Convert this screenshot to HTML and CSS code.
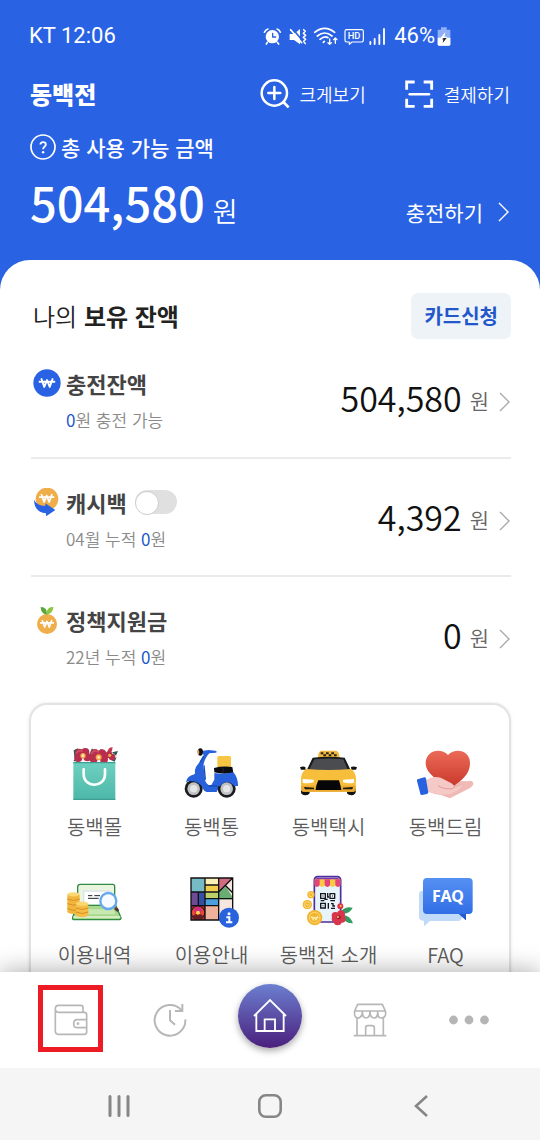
FILE: index.html
```html
<!DOCTYPE html>
<html lang="ko">
<head>
<meta charset="utf-8">
<meta name="viewport" content="width=device-width, initial-scale=1">
<title>동백전</title>
<link rel="stylesheet" href="styles.css">
</head>
<body>
<svg class="defs" aria-hidden="true">
  <defs>
    <linearGradient id="g-bag" x1="0" y1="0" x2="0" y2="1"><stop offset="0" stop-color="#6fd0c0"/><stop offset="1" stop-color="#4cb8a8"/></linearGradient>
    <linearGradient id="g-heart" x1="0" y1="0" x2="0" y2="1"><stop offset="0" stop-color="#ec6a58"/><stop offset="1" stop-color="#c93a2c"/></linearGradient>
    <linearGradient id="g-faq" x1="0" y1="0" x2="0" y2="1"><stop offset="0" stop-color="#5590f2"/><stop offset="1" stop-color="#2b68e4"/></linearGradient>
    <symbol id="won" viewBox="0 0 48 30"><path d="M1 11H47M8 3L16 26L24 6L32 26L40 3" fill="none" stroke="#fff" stroke-width="5.500" stroke-linejoin="round" stroke-linecap="round"/></symbol>
    <symbol id="chevron" viewBox="0 0 12 22"><path d="M1 2L10 11L1 20" fill="none" stroke="currentColor" stroke-width="1.4"/></symbol>
  </defs>
</svg>

<main class="screen">
  <header class="hero">
    <div class="status">
      <span>KT 12:06</span>
      <div class="status-right">
        <svg class="status-icons" viewBox="40 72 369 66" fill="none" stroke="#fff" stroke-width="3.4" stroke-linecap="round" stroke-linejoin="round">
          <circle cx="68" cy="107" r="20" fill="#fff" stroke="none"/>
          <path d="M53 124L50 129M83 124L87 129" stroke-width="5"/>
          <path d="M44 94Q48 86 55 84M82 84Q89 86 92 94" stroke-width="4.500"/>
          <path d="M69 97V108H78" stroke="#2a62e4" stroke-width="4"/>
          <path d="M120 99H133L151 84V130L133 117H120Z" fill="#fff" stroke="none"/>
          <path d="M127 81L161 122" stroke="#2a62e4" stroke-width="5"/>
          <path d="M123 86L156 125" stroke-width="5"/>
          <path d="M162 86L167 91L161 97L168 103L161 109L168 115L162 121L167 128" stroke-width="4.500"/>
          <path d="M195 94Q225 70 255 94M203 105Q225 87 247 105M211 115Q225 104 235 110M221 124L224 121" stroke-width="5"/>
          <path d="M240 114V130M235 125L240 130L245 125M257 127V111M252 116L257 111L262 116" stroke-width="4"/>
          <path d="M291 86H336Q341 86 341 91V118Q341 123 336 123H307L299 130V123H291Q286 123 286 118V91Q286 86 291 86Z" stroke-width="3.500"/>
          <text class="hd-text" x="313" y="115" text-anchor="middle">HD</text>
          <path d="M362 123V129M375 114V129M389 102V129M403 84V129" stroke-width="5.500"/>
        </svg>
        <span>46%</span>
        <svg class="battery" viewBox="563 76 42 60"><path d="M575 80H592V87H603V131Q603 135 599 135H569Q565 135 565 131V87H575Z" fill="#8fb0f5"/><path d="M565 111H603V131Q603 135 599 135H569Q565 135 565 131Z" fill="#fff"/><path d="M588 95L574 112H582" fill="#fff"/><path d="M588 95L585 108H594L590 113H574Z" fill="#fff"/><path d="M583 112H592L580 127L582 116H577Z" fill="#222"/></svg>
      </div>
    </div>

    <div class="topbar">
      <h1 class="brand">동백전</h1>
      <div class="top-actions">
        <button class="top-action" type="button">
          <svg class="icon-30" viewBox="31 237 90 90" fill="none" stroke="#fff" stroke-width="7.5"><circle cx="74" cy="279" r="38"/><path d="M74 261V297M56 279H92" stroke-linecap="round"/><path d="M101 306L117 322" stroke-width="8"/></svg>
          크게보기
        </button>
        <button class="top-action" type="button">
          <svg class="icon-30" viewBox="465 238 90 90" fill="none" stroke="#fff" stroke-width="8.5"><path d="M473 270V247H497M524 247H548V270M548 297V320H524M497 320H473V297" /><path d="M482 284H540" stroke-width="7.5" stroke-linecap="round"/></svg>
          결제하기
        </button>
      </div>
    </div>

    <div class="total">
      <p class="total-label">
        <svg class="icon-26" viewBox="0 0 26 26" fill="none" stroke="#fff"><circle cx="13" cy="13" r="12" stroke-width="1.7"/><path d="M10.4 10.4C10.4 7.4 15.8 7.4 15.8 10.5C15.8 12.6 13.1 12.8 13.1 15.3" stroke-width="1.8"/><circle cx="13.1" cy="18.3" r="1.2" fill="#fff" stroke="none"/></svg>
        총 사용 가능 금액
      </p>
      <div class="total-line">
        <p class="total-amount">504,580<span class="total-unit">원</span></p>
        <a class="charge" href="#charge">충전하기 <svg class="chevron"><use href="#chevron"/></svg></a>
      </div>
    </div>
  </header>

  <section class="panel">
    <div class="panel-head">
      <h2 class="panel-title">나의 <b>보유 잔액</b></h2>
      <button class="card-button" type="button">카드신청</button>
    </div>

    <ul class="balances">
      <li class="balance">
        <div class="balance-info">
          <div class="balance-name">
            <svg class="icon-28" viewBox="0 0 84 84"><circle cx="42" cy="42" r="41" fill="#2a62e4"/><use href="#won" x="17" y="27" width="50" height="31"/></svg>
            <h3>충전잔액</h3>
          </div>
          <p class="balance-note"><em>0</em>원 충전 가능</p>
        </div>
        <a class="balance-value" href="#balance"><strong>504,580</strong><span>원</span><svg class="chevron"><use href="#chevron"/></svg></a>
      </li>
      <li class="balance">
        <div class="balance-info">
          <div class="balance-name">
            <svg class="icon-28" viewBox="40 55 84 84"><circle cx="82" cy="88" r="34" fill="#f0ae4b"/><use href="#won" x="58" y="72" width="46" height="29"/><path d="M43 90Q51 108 77 109V101L107 121L79 140V131Q44 128 43 90Z" fill="#2a62e4"/></svg>
            <h3><label for="cashback">캐시백</label></h3>
            <input class="toggle" id="cashback" type="checkbox" role="switch">
          </div>
          <p class="balance-note">04월 누적 <em>0</em>원</p>
        </div>
        <a class="balance-value" href="#cashback-history"><strong>4,392</strong><span>원</span><svg class="chevron"><use href="#chevron"/></svg></a>
      </li>
      <li class="balance">
        <div class="balance-info">
          <div class="balance-name">
            <svg class="icon-28" viewBox="39 410 84 84"><circle cx="81" cy="464" r="30" fill="#f0ae4b"/><use href="#won" x="60" y="451" width="42" height="26"/><path d="M81 436Q62 434 62 413Q82 412 81 436Z" fill="#58a83a"/><path d="M80 436Q79 411 100 413Q99 432 80 436Z" fill="#8cc63f"/></svg>
            <h3>정책지원금</h3>
          </div>
          <p class="balance-note">22년 누적 <em>0</em>원</p>
        </div>
        <a class="balance-value" href="#support"><strong>0</strong><span>원</span><svg class="chevron"><use href="#chevron"/></svg></a>
      </li>
    </ul>

    <nav class="services" aria-label="서비스">
      <a class="service" href="#mall">
        <svg class="icon-60" viewBox="135 165 180 180">
          <path d="M161 184L173 178L178 196L164 212ZM208 196L216 178L226 190L214 214ZM240 180L256 186L252 204ZM276 190L294 186L288 200ZM274 214L290 204L284 218ZM160 216L168 206L178 218Z" fill="#2f5a55"/>
          <path d="M262 188Q266 174 278 175Q278 186 270 194Z" fill="#c33a50"/>
          <g fill="#b72f4c"><circle cx="178" cy="191" r="12"/><circle cx="196" cy="189" r="12"/><circle cx="202" cy="205" r="12"/><circle cx="175" cy="207" r="12"/><circle cx="225" cy="193" r="13"/><circle cx="246" cy="194" r="13"/><circle cx="252" cy="211" r="12"/><circle cx="221" cy="210" r="12"/><circle cx="267" cy="197" r="10"/><circle cx="276" cy="204" r="10"/></g>
          <path d="M167 194Q178 180 188 188M212 196Q224 178 236 190" fill="none" stroke="#d34c62" stroke-width="5"/>
          <circle cx="189" cy="200" r="8" fill="#f4a64c"/><circle cx="236" cy="205" r="9" fill="#f4a64c"/><circle cx="189" cy="200" r="4" fill="#ffe9b8"/><circle cx="236" cy="205" r="4" fill="#ffe9b8"/><circle cx="269" cy="199" r="5" fill="#f4a64c"/>
          <path d="M160 219H286V333H163Q160 333 160 330Z" fill="url(#g-bag)"/>
          <path d="M160 219H286V223H160ZM160 329H286V333H160Z" fill="#3f9f95"/>
          <path d="M191 241V255C191 298 255 298 255 255V241" fill="none" stroke="#fff" stroke-width="8" stroke-linecap="round"/>
        </svg>
        동백몰
      </a>
      <a class="service" href="#delivery">
        <svg class="icon-60" viewBox="486 165 180 180">
          <path d="M592 206Q592 201 597 201H628Q633 201 633 206V237H592Z" fill="#f7c443"/>
          <path d="M582 237Q609 230 637 234L640 251Q609 258 583 250Z" fill="#0c0d14"/>
          <path d="M609 237V251" stroke="#333" stroke-width="2"/>
          <path d="M545 186L566 183L586 185Q593 188 588 191L568 193Q552 210 550 232L556 276Q562 291 574 288L583 272V252Q610 257 640 250Q654 265 654 291H598L590 309H560Q551 306 548 298L544 282Q522 266 499 278Q500 264 516 258Q526 257 525 250Q522 238 534 226L551 199Z" fill="#2761dc"/>
          <path d="M551 201L541 219M552 229L556 272M566 291H595Q600 274 622 274" fill="none" stroke="#184bb5" stroke-width="4"/>
          <ellipse cx="541" cy="189" rx="8" ry="11" fill="#111"/><path d="M535 181Q530 189 536 199Q541 190 535 181Z" fill="#f3a13a"/>
          <circle cx="521" cy="299" r="27" fill="#191b20"/><circle cx="521" cy="299" r="19" fill="#bfc1c3"/><circle cx="521" cy="299" r="11" fill="#e4e5e6"/>
          <circle cx="620" cy="299" r="27" fill="#191b20"/><circle cx="620" cy="299" r="19" fill="#bfc1c3"/><circle cx="620" cy="299" r="11" fill="#e4e5e6"/>
          <path d="M496 278Q514 260 550 284L548 296Q533 270 496 278ZM590 292Q599 270 624 268Q644 268 654 291H643Q619 267 600 292Z" fill="#2761dc"/>
        </svg>
        동백통
      </a>
      <a class="service" href="#taxi">
        <svg class="icon-60" viewBox="87 165 180 180">
          <path d="M144 206Q144 186 155 185H198Q208 187 209 206Z" fill="#f0b93e"/>
          <path d="M152 190H160V196H152ZM168 190H176V196H168ZM184 190H192V196H184ZM160 196H168V202H160ZM176 196H184V202H176ZM192 196H200V202H192Z" fill="#2e2614"/>
          <path d="M128 206Q175 201 224 206L244 248H108Z" fill="#17181b"/><path d="M133 211Q175 206 220 211L234 243H117Z" fill="#4a4c50"/>
          <path d="M90 235Q98 231 106 234L107 242H93ZM243 234Q252 231 261 235L258 242H244Z" fill="#111"/>
          <path d="M93 298H119V312Q116 319 106 319Q94 318 93 310ZM231 298H257V310Q255 318 245 319Q233 318 231 312Z" fill="#111"/>
          <path d="M109 240Q175 246 243 240Q258 250 258 270L257 301Q257 308 250 308H102Q93 308 93 301V268Q94 249 109 240Z" fill="#f7be3c"/>
          <path d="M94 290H257V301Q257 308 250 308H102Q93 308 93 301Z" fill="#eaa92f"/>
          <path d="M98 270L131 272V280Q110 285 98 281ZM219 272L252 270V281Q240 285 219 280Z" fill="#fff"/>
          <path d="M145 274H207Q211 285 214 303H137Q139 285 145 274Z" fill="#060608"/>
          <path d="M102 294L132 296V301H105ZM219 296L249 294L247 301H219Z" fill="#1d1a12"/>
        </svg>
        동백택시
      </a>
      <a class="service" href="#dream">
        <svg class="icon-60" viewBox="438 165 180 180">
          <path d="M558 276L593 277Q606 271 610 282Q611 290 600 297L540 328L510 317Q485 314 472 305L525 283Z" fill="#efb9b5"/>
          <path d="M534 198C511 174 467 185 467 223C468 256 506 276 533 287Q550 292 556 287C588 265 600 247 600 221C599 184 557 175 534 198Z" fill="url(#g-heart)"/>
          <path d="M468 273Q490 259 512 266L543 282Q554 288 551 298L580 288Q566 306 540 315L510 317Q486 313 474 307Z" fill="#f5c9c5"/>
          <path d="M504 290Q521 302 548 299L557 289" fill="none" stroke="#df9c99" stroke-width="3"/>
          <path d="M443 271L463 265Q467 264 468 269L475 310Q475 314 471 315L456 318Q452 319 451 314L441 276Q440 272 443 271Z" fill="#2761e0"/>
        </svg>
        동백드림
      </a>
      <a class="service" href="#history">
        <svg class="icon-60" viewBox="135 39 180 180">
          <path d="M181 76H278Q284 76 284 82V139H173V84Q173 76 181 76Z" fill="#e9f5dc" stroke="#2f8a43" stroke-width="4"/>
          <path d="M189 94H272V137H189Z" fill="#fff"/><path d="M189 94H272V98H193V137H189Z" fill="#d9e3e6"/>
          <path d="M204 110H217M223 110H240M204 118H236" stroke="#20252a" stroke-width="3"/>
          <path d="M172 139H287L303 176Q303 182 296 182H163Q156 182 158 175Z" fill="#a9d78c" stroke="#2f8a43" stroke-width="4" stroke-linejoin="round"/>
          <path d="M187 151H281L286 166H182Z" fill="#c7e8b0"/><path d="M160 174H301" stroke="#e4f4d8" stroke-width="5"/>
          <path d="M142 107V158Q144 164 160 165Q177 164 179 158V107Z" fill="#f2b63c"/><ellipse cx="160.500" cy="106" rx="18" ry="6.500" fill="#fbd772"/>
          <path d="M142 120Q160 129 179 120M142 134Q160 143 179 134M142 148Q160 157 170 152" fill="none" stroke="#d98f24" stroke-width="3"/>
          <path d="M168 135V168Q170 174 186 175Q202 174 205 168V135Z" fill="#f5bd45"/><ellipse cx="186.500" cy="134" rx="18.500" ry="6.500" fill="#fbd772"/><path d="M168 147Q186 156 205 147M168 159Q186 168 205 159" fill="none" stroke="#d98f24" stroke-width="3"/>
          <path d="M284 145L293 153" stroke="#7a6655" stroke-width="8"/><path d="M286 148L295 156" stroke="#4d3c33" stroke-width="9"/>
          <circle cx="265" cy="126" r="24" fill="#f6fbff" stroke="#68a8ef" stroke-width="7"/>
        </svg>
        이용내역
      </a>
      <a class="service" href="#guide">
        <svg class="icon-60" viewBox="486 39 180 180">
          <path d="M513 57H638V183H513Z" fill="#f5e6df"/>
          <path d="M513 57H555V99H513Z" fill="#76bac5"/><path d="M555 57H596V78H555Z" fill="#faf0b5"/><path d="M555 78H596V98H555Z" fill="#f2cd4c"/><path d="M555 98H596V119H555Z" fill="#bccf6a"/><path d="M555 119H596V138H555Z" fill="#4c9fdd"/>
          <path d="M513 99H535V140H513Z" fill="#6e4b94"/><path d="M535 99H555V140H535Z" fill="#354fa2"/><path d="M555 138H596V183H555Z" fill="#efb39c"/><path d="M596 57H638L596 99Z" fill="#d36b82"/><path d="M596 99L617 82L638 115V121H596Z" fill="#69ad72"/><path d="M513 140H555V183H513Z" fill="#a22c38"/>
          <path d="M513 57H638V183H513ZM555 57V183M596 57V183M513 99H596M555 78H596M555 119H638M513 140H596M535 99V140M596 99L638 57M617 80L638 101" fill="none" stroke="#101012" stroke-width="4"/>
          <circle cx="534" cy="161" r="20" fill="#e84b2d" stroke="#15101a" stroke-width="3"/><circle cx="534" cy="154" r="11" fill="#cf2b82"/><path d="M518 171Q534 158 550 171Q543 181 534 180Q523 180 518 171Z" fill="#661c24"/><circle cx="534" cy="161" r="6" fill="#ffd24a"/>
          <circle cx="627" cy="176" r="30" fill="#2862dc"/><circle cx="627" cy="164" r="4.500" fill="#fff"/><path d="M619 175H628V189M618 190H637" fill="none" stroke="#fff" stroke-width="6"/>
        </svg>
        이용안내
      </a>
      <a class="service" href="#about">
        <svg class="icon-60" viewBox="87 39 180 180">
          <rect x="133" y="53" width="79" height="136" rx="10" fill="#e7f4fb" stroke="#4f2c9b" stroke-width="5"/>
          <path d="M135 62Q137 56 144 56H202Q208 57 210 62V70H135Z" fill="#7b3cae"/>
          <path d="M134 61H211V78Q205 89 196 79Q188 89 180 79Q172 89 164 79Q156 89 149 79Q139 89 134 78Z" fill="#f8cb42"/><path d="M134 61H149V79Q139 89 134 78ZM164 61H180V79Q172 89 164 79ZM196 61H211V78Q205 89 196 79Z" fill="#e5437c"/>
          <path d="M152 104H166V118H152ZM180 104H194V118H180ZM152 133H166V147H152Z" fill="none" stroke="#17171c" stroke-width="4"/>
          <path d="M173 102V114H177M173 121H163M152 125H163M181 125H195M175 132V149M183 134H189V141H195M183 148H195M158 111H160M186 111H188M158 140H160" fill="none" stroke="#17171c" stroke-width="4"/>
          <g fill="#f3b431"><circle cx="123" cy="107" r="11"/><circle cx="112" cy="137" r="14"/><circle cx="134" cy="176" r="23"/></g><g fill="none" stroke="#fbdc73" stroke-width="3"><circle cx="123" cy="107" r="6"/><circle cx="112" cy="137" r="9"/><circle cx="134" cy="176" r="16"/></g>
          <path d="M125 171L130 184L134 174L138 184L143 171M122 176H146" fill="none" stroke="#fff0b0" stroke-width="3"/><path d="M108 135L112 140L116 135" fill="none" stroke="#fff0b0" stroke-width="2"/>
          <path d="M213 157Q228 140 248 146Q241 162 220 164ZM220 168Q240 169 249 193Q227 194 216 174Z" fill="#329d62"/>
          <g fill="#d9364d"><circle cx="211" cy="142" r="9"/><circle cx="196" cy="170" r="11"/><circle cx="213" cy="166" r="12"/><circle cx="216" cy="180" r="11"/><circle cx="203" cy="187" r="12"/><circle cx="194" cy="180" r="9"/><circle cx="205" cy="176" r="12"/></g><circle cx="206" cy="175" r="6" fill="#8e1d35"/><circle cx="204" cy="174" r="3" fill="#ffc748"/><circle cx="212" cy="141" r="3" fill="#ffc748"/>
        </svg>
        동백전 소개
      </a>
      <a class="service" href="#faq">
        <svg class="icon-60" viewBox="438 39 180 180">
          <path d="M457 95H566Q576 95 576 105V176Q574 185 564 186H480L462 202V186Q447 185 447 174V105Q447 96 457 95Z" fill="#c2daf9"/>
          <path d="M471 57H596Q608 57 608 69V153Q608 165 596 165H588V184L567 165H471Q459 165 459 153V69Q459 57 471 57Z" fill="url(#g-faq)"/>
          <path d="M567 165H588V184Z" fill="#2458cf"/>
          <text class="faq-text" x="534" y="129" text-anchor="middle">FAQ</text>
        </svg>
        FAQ
      </a>
    </nav>
  </section>
</main>

<nav class="tabs" aria-label="메뉴">
  <button class="tab tab-marked" type="button" aria-label="지갑">
    <svg class="icon-36" viewBox="98 125 108 108" fill="none" stroke="#b7b7b7" stroke-width="5" stroke-linejoin="round"><path d="M188 156V142Q188 135 181 135H114Q105 135 105 145.500Q105 156 115 156H192Q199 156 199 163V215Q199 222 192 222H114Q105 222 105 213V146"/><path d="M199 178H171Q160 178 160 190Q160 202 171 202H199"/><circle cx="173" cy="190" r="4" fill="#b7b7b7" stroke="none"/></svg>
  </button>
  <button class="tab" type="button" aria-label="이용내역">
    <svg class="icon-36" viewBox="397 125 108 108" fill="none" stroke="#b7b7b7" stroke-width="6"><path d="M497 177A46 46 0 1 1 486 150"/><path d="M488 131V152H466M451 149V180L466 193"/></svg>
  </button>
  <button class="tab tab-home" type="button" aria-label="홈">
    <svg class="icon-36" viewBox="698 115 108 108" fill="none" stroke="#fff" stroke-width="5.500"><path d="M704 169L752 121L800 169M711 164V214H793V164M736 214V179H767V214"/></svg>
  </button>
  <button class="tab" type="button" aria-label="가맹점">
    <svg class="icon-36" viewBox="93 125 108 108" fill="none" stroke="#b7b7b7" stroke-width="5" stroke-linejoin="round"><path d="M110 132H184L193 152H101ZM101 152H193Q196 164 190 170Q182 176 173 170Q170 165 170 152Q171 173 159 173Q147 173 147 152Q147 173 135 173Q124 173 124 152Q124 173 110 173Q98 171 101 152M108 172V226M187 172V226M98 226H196M134 226V202Q134 196 140 196H154Q160 196 160 202V226"/></svg>
  </button>
  <button class="tab" type="button" aria-label="더보기">
    <svg class="icon-40" viewBox="0 0 40 40" fill="#b5b5b5"><circle cx="4.500" cy="20" r="4.400"/><circle cx="20" cy="20" r="4.400"/><circle cx="35.500" cy="20" r="4.400"/></svg>
  </button>
</nav>

<nav class="system" aria-label="시스템">
  <button class="system-key" type="button" aria-label="최근 앱"><svg class="icon-24" viewBox="0 0 24 24" stroke="#868686" stroke-width="3" stroke-linecap="round"><path d="M3 2.500V21.500M12 2.500V21.500M21 2.500V21.500"/></svg></button>
  <button class="system-key" type="button" aria-label="홈 화면"><svg class="icon-24" viewBox="0 0 24 24" fill="none" stroke="#868686" stroke-width="2.600"><rect x="1.300" y="1.300" width="21.400" height="21.400" rx="6.500"/></svg></button>
  <button class="system-key" type="button" aria-label="뒤로"><svg class="icon-24" viewBox="0 0 24 24" fill="none" stroke="#868686" stroke-width="2.600"><path d="M18 2L7 12L18 22"/></svg></button>
</nav>
</body>
</html>
```
FILE: styles.css
```css
* { box-sizing: border-box; }

body {
  margin: 0;
  height: 100vh;
  display: flex;
  flex-direction: column;
  background: #fff;
  color: #222;
  font-family: "Noto Sans CJK KR", "Noto Sans", sans-serif;
}

h1, h2, h3, p, ul { margin: 0; padding: 0; }
ul { list-style: none; }
a { color: inherit; text-decoration: none; }
button {
  margin: 0;
  padding: 0;
  border: 0;
  background: none;
  color: inherit;
  font: inherit;
}
svg { display: block; flex: none; }

.defs { position: absolute; width: 0; height: 0; }
.icon-24 { width: 24px; height: 24px; }
.icon-26 { width: 26px; height: 26px; }
.icon-28 { width: 28px; height: 28px; }
.icon-30 { width: 30px; height: 30px; }
.icon-36 { width: 36px; height: 36px; }
.icon-40 { width: 40px; height: 40px; }
.icon-60 { width: 60px; height: 60px; }
.chevron { width: 12px; height: 22px; }

.screen {
  flex: 1;
  min-height: 0;
  overflow: hidden;
  background: #2a62e4;
}

/* Blue header */
.hero { padding: 0 30px 17px; color: #fff; }

.status {
  display: flex;
  justify-content: space-between;
  align-items: center;
  height: 72px;
  padding-right: 59px;
  font: 22px/28px Roboto, sans-serif;
}
.status > span { margin-left: -1px; }
.status-right { display: flex; align-items: center; }
.status-icons { width: 123px; height: 22px; margin-right: 8px; }
.battery { width: 14px; height: 20px; margin-left: 2px; }
.hd-text {
  font: 500 28px Roboto, sans-serif;
  fill: #fff;
  stroke: none;
}

.topbar {
  display: flex;
  justify-content: space-between;
  align-items: center;
  height: 44px;
}
.brand { font-size: 24px; font-weight: 900; line-height: 36px; }
.top-actions { display: flex; gap: 38px; }
.top-action {
  display: flex;
  align-items: center;
  gap: 10px;
  font-size: 18px;
  font-weight: 350;
  line-height: 30px;
}

.total-label {
  display: flex;
  align-items: center;
  gap: 5px;
  margin-top: 15px;
  font-size: 21px;
  font-weight: 500;
  line-height: 32px;
}
.total-line {
  display: flex;
  justify-content: space-between;
  align-items: flex-end;
  margin-top: 7px;
}
.total-amount {
  display: flex;
  align-items: baseline;
  gap: 8px;
  font-size: 47px;
  font-weight: 500;
  line-height: 64px;
}
.total-unit { font-size: 27px; font-weight: 350; }
.charge {
  display: flex;
  align-items: center;
  gap: 15px;
  padding-bottom: 15px;
  font-size: 21px;
  font-weight: 400;
  line-height: 32px;
}

/* White sheet */
.panel {
  min-height: 100%;
  padding: 33px 29px 0;
  border-radius: 30px 30px 0 0;
  background: #fff;
}
.panel-head {
  display: flex;
  justify-content: space-between;
  align-items: center;
  padding-left: 4px;
}
.panel-title { font-size: 24px; font-weight: 350; line-height: 36px; }
.panel-title b { font-weight: 700; }
.card-button {
  padding: 8px 13px;
  border-radius: 7px;
  background: #eef3f8;
  color: #2257cc;
  font-size: 20px;
  font-weight: 700;
  line-height: 30px;
}

.balances { padding-left: 2px; }
.balance {
  display: flex;
  justify-content: space-between;
  align-items: center;
  min-height: 118px;
  padding-left: 2px;
}
.balance + .balance { border-top: 2px solid #ebebeb; }
.balance-info { padding-top: 2px; }
.balance-name {
  display: flex;
  align-items: center;
  gap: 5px;
  color: #444;
}
.balance-name h3 { font-size: 22px; font-weight: 700; line-height: 34px; }
.balance-note {
  padding: 7px 0 0 33px;
  color: #8a8a8a;
  font-size: 17px;
  font-weight: 350;
  line-height: 26px;
}
.balance-note em { color: #2257cc; font-style: normal; font-weight: 400; }
.balance-value {
  display: flex;
  align-items: center;
  line-height: 50px;
}
.balance-value strong { color: #111; font-size: 34px; font-weight: 350; }
.balance-value span { margin: 4px 10px 0 8px; color: #666; font-size: 21px; font-weight: 350; }
.balance-value .chevron { margin-top: 8px; color: #aaa; }

.toggle {
  appearance: none;
  width: 42px;
  height: 24px;
  margin: 0 0 0 3px;
  border-radius: 12px;
  background: #e0e0e0;
}
.toggle::before {
  content: "";
  display: block;
  width: 22px;
  height: 22px;
  margin-top: 1px;
  border: 1px solid #ccc;
  border-radius: 50%;
  background: #fff;
}
.toggle:checked { background: #2a62e4; }
.toggle:checked::before { margin-left: auto; }

.services {
  display: grid;
  grid-template-columns: repeat(4, 1fr);
  row-gap: 30px;
  margin-top: 10px;
  padding: 39px 5px;
  border: 2px solid #e3e3e3;
  border-radius: 18px;
  box-shadow: 0 0 3px #e3e3e3;
}
.service {
  display: flex;
  flex-direction: column;
  align-items: center;
  gap: 8px;
  color: #5c5c5c;
  font-size: 20px;
  font-weight: 350;
  line-height: 30px;
  white-space: nowrap;
}
.faq-text {
  font: 700 48px "Noto Sans", sans-serif;
  fill: #fff;
}

/* Bottom tabs */
.tabs {
  position: relative;
  display: grid;
  grid-template-columns: repeat(5, 1fr);
  place-items: center;
  height: 96px;
  padding: 0 21px;
  background: #fff;
  box-shadow: 0 0 24px rgba(0, 0, 0, 0.35);
}
.tab {
  display: grid;
  place-items: center;
  width: 65px;
  height: 67px;
}
.tab-marked {
  margin-bottom: 4px;
  padding-top: 4px;
  border: 5px solid #ed1c24;
}
.tab-home {
  width: 64px;
  height: 64px;
  margin-bottom: 8px;
  border-radius: 50%;
  background: linear-gradient(#6c7fd0, #4a1f7c);
  box-shadow: 0 3px 7px rgba(0, 0, 0, 0.35);
}

/* Device keys */
.system {
  position: relative;
  display: grid;
  grid-template-columns: repeat(3, 1fr);
  height: 72px;
  padding: 4px 44px 0;
  background: #f5f5f5;
}
.system-key { display: grid; place-items: center; }
```
